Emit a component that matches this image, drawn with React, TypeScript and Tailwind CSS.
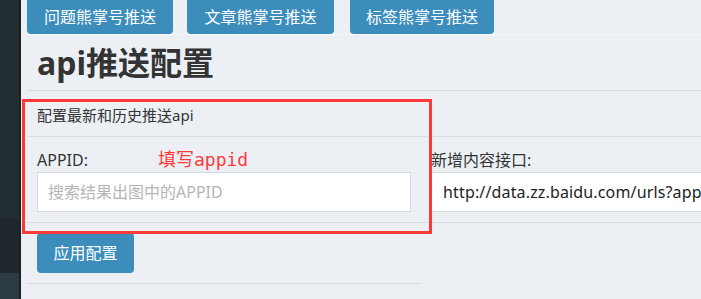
const FONT = { fontFamily: '"Noto Sans", "Noto Sans CJK SC", sans-serif' }

const TAB_BTN =
  'h-[34px] flex items-center justify-center rounded-b-[4px] bg-[#3c8dbc] text-white text-[16px] leading-none'

export default function App() {
  return (
    <div className="flex h-[299px] w-[701px] overflow-hidden bg-[#ecf0f5] text-[#333]" style={FONT}>
      {/* Sidebar edge */}
      <div className="flex w-[21px] shrink-0 border-r-2 border-[#1a2226]">
        <div className="flex w-full flex-col">
          <div className="h-[219px] bg-[#222d32]" />
          <div className="h-[54px] bg-[#1e282c]" />
          <div className="flex-1 bg-[#2c3b41]" />
        </div>
      </div>

      {/* Main content */}
      <div className="relative min-w-0 flex-1 pl-[6px]">
        <div className="flex border-b border-[#f3f5f8]">
          <div className={TAB_BTN + ' w-[146px]'}>问题熊掌号推送</div>
          <div className={TAB_BTN + ' ml-[14px] w-[147px]'}>文章熊掌号推送</div>
          <div className={TAB_BTN + ' ml-[16px] w-[144px]'}>标签熊掌号推送</div>
        </div>

        <div className="border-b border-[#d9dce1] pl-[10px] pt-[8px] pb-[7px]">
          <h1 className="text-[32px] font-bold leading-[40px] text-[#333]">api推送配置</h1>
        </div>

        {/* Panel */}
        <div className="border-b border-[#d9dce1] pl-[10px] pt-[14px] pb-[11px] text-[15px] leading-[20px]">
          配置最新和历史推送api
        </div>

        <div className="flex gap-[20px] border-b border-[#d9dce1] pl-[10px] pt-[13px] pb-[10px]">
          <div className="w-[374px] shrink-0">
            <div className="text-[16px] leading-[20px]">APPID:</div>
            <div className="mt-[2px] flex h-[40px] items-center border border-[#d2d6de] bg-white pl-[10px] text-[16px] text-[#b5b5b5]">
              搜索结果出图中的APPID
            </div>
          </div>
          <div className="min-w-0 flex-1">
            <div className="text-[16px] leading-[20px]">新增内容接口:</div>
            <div className="mt-[2px] flex h-[40px] items-center overflow-hidden whitespace-nowrap border border-r-0 border-[#d2d6de] bg-white pl-[11px] text-[16px] tracking-[0.15px] text-[#222]">
              http://data.zz.baidu.com/urls?app
            </div>
          </div>
        </div>

        <div className="w-[394px] border-b border-[#d9dce1] pl-[10px] pt-[10px] pb-[10px]">
          <div className="flex h-[40px] w-[97px] items-center justify-center rounded-[4px] bg-[#3c8dbc] text-[16px] text-white">
            应用配置
          </div>
        </div>

        {/* Annotation overlay */}
        <div className="pointer-events-none absolute left-[1px] top-[99px] h-[135px] w-[410px] border-[3px] border-[#fd3a3a]" />
        <div
          className="pointer-events-none absolute left-[137px] top-[148px] text-[18px] leading-[24px] text-[#fd3a3a]"
          style={{ fontFamily: '"DejaVu Sans Mono", "Noto Sans CJK SC", monospace' }}
        >
          填写appid
        </div>
      </div>
    </div>
  )
}
